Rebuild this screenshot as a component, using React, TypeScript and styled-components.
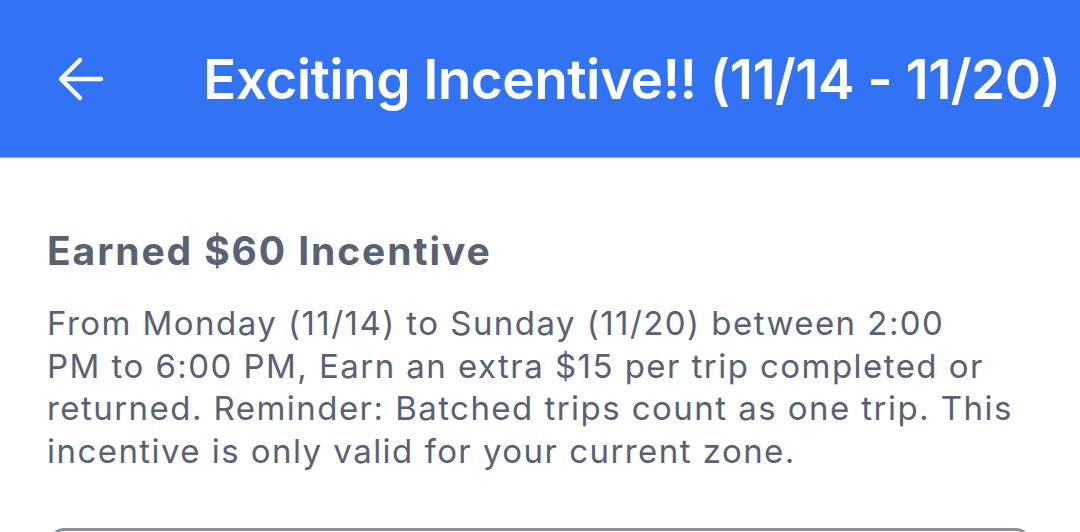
import styled, { createGlobalStyle } from "styled-components";

const GlobalStyle = createGlobalStyle`
  html, body {
    margin: 0;
    padding: 0;
    background: #ffffff;
  }
  body {
    font-family: Inter, "Noto Sans", "Liberation Sans", sans-serif;
    -webkit-font-smoothing: antialiased;
  }
`;

const Screen = styled.div`
  width: 1080px;
  height: 532px;
  overflow: hidden;
  display: flex;
  flex-direction: column;
  background: #ffffff;
`;

const TopBar = styled.header`
  flex: 0 0 157px;
  display: flex;
  align-items: center;
  background: #3273f6;
  box-shadow: 0 1px 1px rgba(40, 70, 140, 0.45);
  padding: 0 18px 0 55px;
  box-sizing: border-box;
  z-index: 1;
`;

const BackButton = styled.button`
  width: 50px;
  height: 50px;
  padding: 0;
  margin-right: 98px;
  border: 0;
  background: none;
  color: #ffffff;
  display: flex;
  align-items: center;
  justify-content: center;
  flex-shrink: 0;
`;

const Title = styled.h1`
  margin: 0;
  min-width: 0;
  color: #ffffff;
  font-size: 55px;
  font-weight: 600;
  letter-spacing: -0.6px;
  white-space: nowrap;
  overflow: hidden;
  text-overflow: ellipsis;
`;

const Content = styled.main`
  flex: 1;
  padding: 70px 47px 0;
  display: flex;
  flex-direction: column;
`;

const Heading = styled.h2`
  margin: 0 0 27px;
  color: #596175;
  font-size: 39px;
  font-weight: 700;
  letter-spacing: 1.9px;
  line-height: 48px;
`;

const Body = styled.p`
  margin: 0;
  color: #596175;
  font-size: 33px;
  line-height: 42.6px;
  letter-spacing: 1.45px;
  font-weight: 400;
  white-space: nowrap;
`;

const Card = styled.section`
  margin: 56px 3px 0;
  height: 120px;
  border: 3px solid #8c919b;
  border-radius: 14px;
  flex-shrink: 0;
`;

function ArrowLeft() {
  return (
    <svg width="48" height="48" viewBox="0 0 48 48" fill="none">
      <path
        d="M45 24H5M24 5L5 24l19 19"
        stroke="currentColor"
        strokeWidth="4.5"
        strokeLinecap="round"
        strokeLinejoin="round"
      />
    </svg>
  );
}

export default function App() {
  return (
    <>
      <GlobalStyle />
      <Screen>
        <TopBar>
          <BackButton aria-label="Back">
            <ArrowLeft />
          </BackButton>
          <Title>Exciting Incentive!! (11/14 - 11/20)</Title>
        </TopBar>
        <Content>
          <Heading>Earned $60 Incentive</Heading>
          <Body>
            From Monday (11/14) to Sunday (11/20) between 2:00
            <br />
            PM to 6:00 PM, Earn an extra $15 per trip completed or
            <br />
            returned. Reminder: Batched trips count as one trip. This
            <br />
            incentive is only valid for your current zone.
          </Body>
          <Card />
        </Content>
      </Screen>
    </>
  );
}
